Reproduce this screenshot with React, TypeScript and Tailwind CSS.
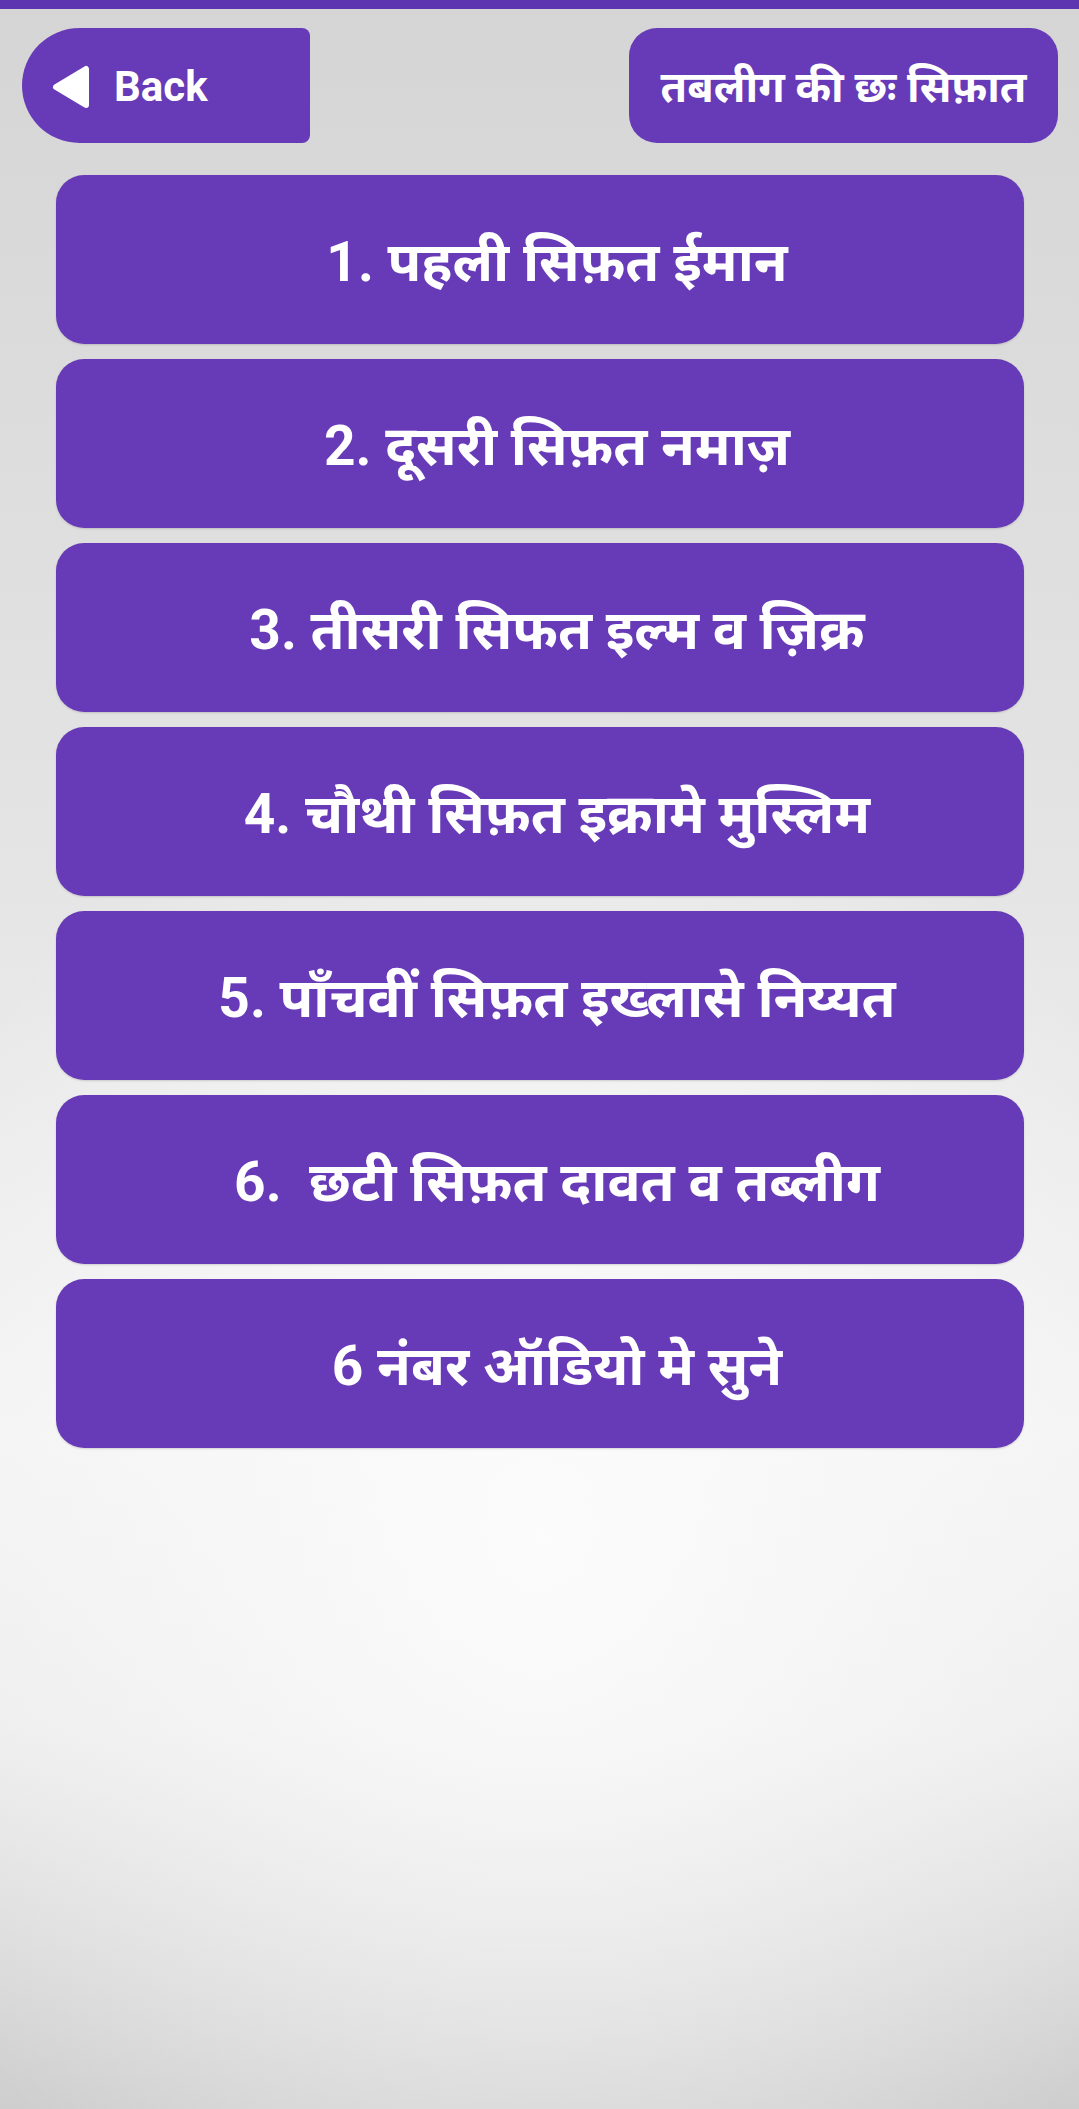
import React from "react";

const items = [
  "1. पहली सिफ़त ईमान",
  "2. दूसरी सिफ़त नमाज़",
  "3. तीसरी सिफत इल्म व ज़िक्र",
  "4. चौथी सिफ़त इक्रामे मुस्लिम",
  "5. पाँचवीं सिफ़त इख्लासे निय्यत",
  "6.  छटी सिफ़त दावत व तब्लीग",
  "6 नंबर ऑडियो मे सुने",
];

const font = {
  fontFamily:
    'Roboto, "Noto Sans Devanagari", "Lohit Devanagari", "Noto Sans", sans-serif',
};

export default function App() {
  return (
    <main
      style={font}
      className="min-h-[2109px] w-full bg-[radial-gradient(ellipse_65%_40%_at_50%_73%,rgba(252,252,252,0.95),rgba(252,252,252,0)),linear-gradient(to_bottom,#d5d5d5,#e4e4e4_40%,#f3f3f3_68%,#ececec_82%,#cecece)]"
    >
      <div className="h-[9px] bg-[#5e35b1]" />

      <div className="mt-[19px] flex items-start justify-between pl-[22px] pr-[21px]">
        <button className="flex h-[115px] w-[288px] items-center rounded-l-[58px] rounded-r-[8px] bg-[#673ab7] pl-[29px] pt-[3px] text-white">
          <svg width="40" height="46" viewBox="0 0 40 46">
            <polygon
              points="35,5 35,41 5,23"
              fill="white"
              stroke="white"
              strokeWidth="6"
              strokeLinejoin="round"
            />
          </svg>
          <span className="ml-[23px] text-[42px] font-bold leading-none">Back</span>
        </button>

        <div className="flex h-[115px] w-[429px] items-center justify-center rounded-[28px] bg-[#673ab7] pt-[4px] text-[43px] font-bold text-white">
          तबलीग की छः सिफ़ात
        </div>
      </div>

      <div className="mt-[32px] flex flex-col gap-[15px] pl-[56px] pr-[55px]">
        {items.map((t) => (
          <div
            key={t}
            className="flex h-[169px] items-center justify-center whitespace-pre rounded-[28px] bg-[#673ab7] pl-[34px] pt-[6px] text-[55px] font-bold text-white shadow-[0_1px_2px_rgba(0,0,0,0.15)]"
          >
            {t}
          </div>
        ))}
      </div>
    </main>
  );
}
